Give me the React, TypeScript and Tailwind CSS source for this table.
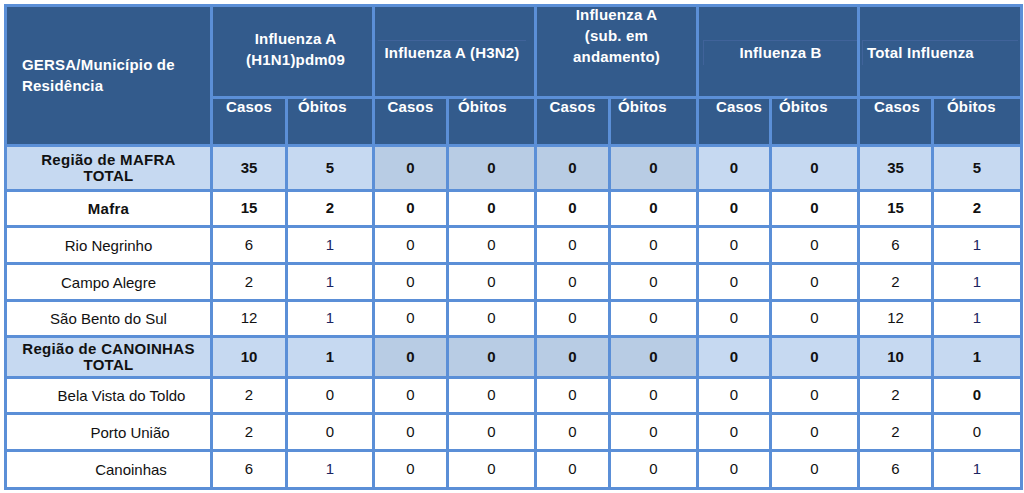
import React from 'react'

type Row = {
  name: string[]
  kind: 'region' | 'city' | 'plain'
  indent?: string
  values: number[]
  boldLast?: boolean
}

const rows: Row[] = [
  { name: ['Região de MAFRA', 'TOTAL'], kind: 'region', values: [35, 5, 0, 0, 0, 0, 0, 0, 35, 5] },
  { name: ['Mafra'], kind: 'city', values: [15, 2, 0, 0, 0, 0, 0, 0, 15, 2] },
  { name: ['Rio Negrinho'], kind: 'plain', values: [6, 1, 0, 0, 0, 0, 0, 0, 6, 1] },
  { name: ['Campo Alegre'], kind: 'plain', values: [2, 1, 0, 0, 0, 0, 0, 0, 2, 1] },
  { name: ['São Bento do Sul'], kind: 'plain', values: [12, 1, 0, 0, 0, 0, 0, 0, 12, 1] },
  { name: ['Região de CANOINHAS', 'TOTAL'], kind: 'region', values: [10, 1, 0, 0, 0, 0, 0, 0, 10, 1] },
  { name: ['Bela Vista do Toldo'], kind: 'plain', indent: 'pl-[26px]', values: [2, 0, 0, 0, 0, 0, 0, 0, 2, 0], boldLast: true },
  { name: ['Porto União'], kind: 'plain', indent: 'pl-[43px]', values: [2, 0, 0, 0, 0, 0, 0, 0, 2, 0] },
  { name: ['Canoinhas'], kind: 'plain', indent: 'pl-[45px]', values: [6, 1, 0, 0, 0, 0, 0, 0, 6, 1] },
]

// sub header cells: Casos centred, Óbitos sits a little to the left
const subHeads = [
  { label: 'Casos', cls: 'justify-center' },
  { label: 'Óbitos', cls: 'justify-start pl-[10px]' },
  { label: 'Casos', cls: 'justify-center' },
  { label: 'Óbitos', cls: 'justify-start pl-[9px]' },
  { label: 'Casos', cls: 'justify-center' },
  { label: 'Óbitos', cls: 'justify-start pl-[7px]' },
  { label: 'Casos', cls: 'justify-start pl-[17px]' },
  { label: 'Óbitos', cls: 'justify-start pl-[7px]' },
  { label: 'Casos', cls: 'justify-center pl-[3px]' },
  { label: 'Óbitos', cls: 'justify-start pl-[13px]' },
]

export default function App() {
  return (
    <div className="min-h-screen bg-white pt-[4px] pl-[4px] font-['Liberation_Sans',Arial,sans-serif]">
      <div className="grid w-fit gap-[3px] bg-[#5b8fd7] p-[3px] grid-cols-[203px_72px_84px_71px_85px_71px_85px_70px_85px_71px_86px] grid-rows-[89px_45px_42px_33px_34px_34px_33px_38px_33px_34px_35px]">
        {/* Header */}
        <div className="row-span-2 flex items-center bg-[#335b8c] pl-[15px] text-[15px] font-bold leading-[21px] tracking-[0.2px] text-white">
          <div className="-mt-[1px]">GERSA/Município de<br />Residência</div>
        </div>
        <div className="col-span-2 flex items-center justify-center bg-[#335b8c] text-center text-[15px] font-bold leading-[21px] tracking-[0.2px] text-white">
          <div className="-mt-[5px] pl-[6px]">Influenza A<br />(H1N1)pdm09</div>
        </div>
        <div className="col-span-2 flex flex-col bg-[#335b8c] text-[15px] font-bold leading-[21px] tracking-[0.2px] text-white">
          <div className="mt-[33px] ml-[3px] mr-[8px] border-t border-[#40639a] pt-[1px] text-center">Influenza A (H3N2)</div>
        </div>
        <div className="col-span-2 flex items-start justify-center bg-[#335b8c] text-center text-[15px] font-bold leading-[21px] tracking-[0.2px] text-white">
          <div className="-mt-[3px]">Influenza A<br />(sub. em<br />andamento)</div>
        </div>
        <div className="col-span-2 flex flex-col bg-[#335b8c] text-[15px] font-bold leading-[21px] tracking-[0.2px] text-white">
          <div className="mt-[33px] ml-[4px] border-t border-l border-[#40639a] pt-[1px] pb-[2px] text-center">Influenza B</div>
        </div>
        <div className="col-span-2 flex flex-col bg-[#335b8c] text-[15px] font-bold leading-[21px] tracking-[0.2px] text-white">
          <div className="mt-[33px] ml-[2px] mr-[2px] border-t border-l border-[#40639a] pt-[1px] pb-[2px] pl-[4px]">Total Influenza</div>
        </div>
        {subHeads.map((h, i) => (
          <div
            key={i}
            className={`flex items-start bg-[#335b8c] text-[15px] font-bold leading-[16px] tracking-[0.2px] text-white ${h.cls}`}
          >
            {h.label}
          </div>
        ))}

        {/* Body */}
        {rows.map((r, ri) => {
          const region = r.kind === 'region'
          const bold = r.kind !== 'plain'
          return (
            <React.Fragment key={ri}>
              <div
                className={`flex items-center justify-center text-center text-[15px] text-[#111] ${
                  region ? 'bg-[#c6d9f1] leading-[16px]' : 'bg-white leading-[19px]'
                } ${bold ? 'font-bold tracking-[0.3px]' : ''} ${r.indent ?? ''}`}
              >
                <div>
                  {r.name.map((n, i) => (
                    <div key={i}>{n}</div>
                  ))}
                </div>
              </div>
              {r.values.map((v, vi) => {
                const shaded = region && vi >= 2 && vi <= 5
                const isBold = bold || (r.boldLast && vi === 9)
                const blueOne = !bold && v === 1
                return (
                  <div
                    key={vi}
                    className={`flex items-center justify-center text-[15px] ${
                      region ? (shaded ? 'bg-[#b8cce4]' : 'bg-[#c6d9f1]') : 'bg-white'
                    } ${isBold ? 'font-bold' : ''} ${blueOne ? 'text-[#1c2560]' : 'text-[#111]'}`}
                  >
                    {v}
                  </div>
                )
              })}
            </React.Fragment>
          )
        })}
      </div>
    </div>
  )
}
